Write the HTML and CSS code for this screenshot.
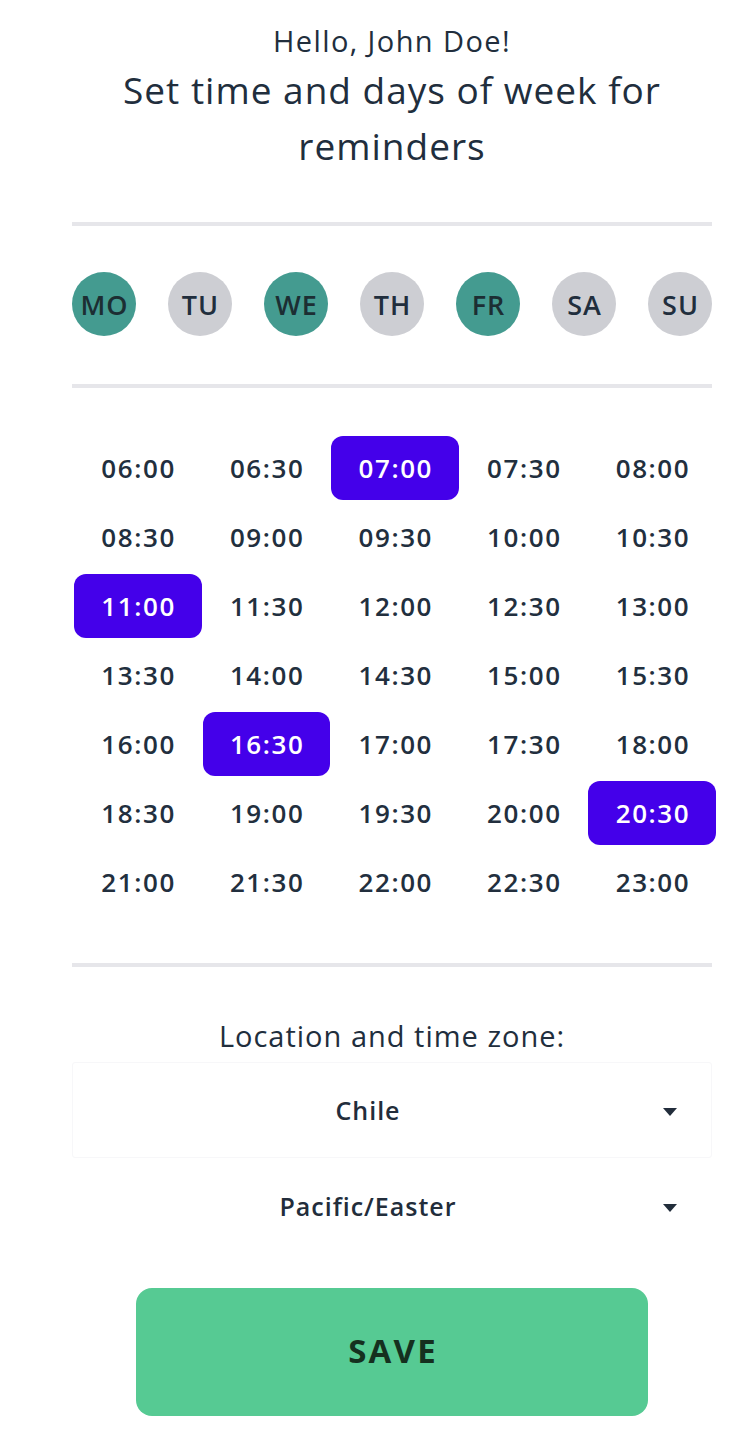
FILE: index.html
```html
<!DOCTYPE html>
<html>
<head>
<meta charset="utf-8">
<link rel="stylesheet" href="styles.css">
</head>
<body>
<main class="page">
  <header class="head">
    <p class="hello">Hello, John Doe!</p>
    <h1 class="title">Set time and days of week for reminders</h1>
  </header>
  <hr class="divider divider-top">
  <div class="days">
    <span class="day on">MO</span>
    <span class="day">TU</span>
    <span class="day on">WE</span>
    <span class="day">TH</span>
    <span class="day on">FR</span>
    <span class="day">SA</span>
    <span class="day">SU</span>
  </div>
  <hr class="divider">
  <div class="times">
    <span class="time">06:00</span><span class="time">06:30</span><span class="time sel">07:00</span><span class="time">07:30</span><span class="time">08:00</span>
    <span class="time">08:30</span><span class="time">09:00</span><span class="time">09:30</span><span class="time">10:00</span><span class="time">10:30</span>
    <span class="time sel">11:00</span><span class="time">11:30</span><span class="time">12:00</span><span class="time">12:30</span><span class="time">13:00</span>
    <span class="time">13:30</span><span class="time">14:00</span><span class="time">14:30</span><span class="time">15:00</span><span class="time">15:30</span>
    <span class="time">16:00</span><span class="time sel">16:30</span><span class="time">17:00</span><span class="time">17:30</span><span class="time">18:00</span>
    <span class="time">18:30</span><span class="time">19:00</span><span class="time">19:30</span><span class="time">20:00</span><span class="time sel">20:30</span>
    <span class="time">21:00</span><span class="time">21:30</span><span class="time">22:00</span><span class="time">22:30</span><span class="time">23:00</span>
  </div>
  <hr class="divider divider-bottom">
  <p class="loc-label">Location and time zone:</p>
  <div class="select framed">
    <span class="select-text">Chile</span>
    <span class="select-arrow"><svg width="14" height="8" viewBox="0 0 14 8"><path d="M0 0H14L7 8Z" fill="#222d3b"/></svg></span>
  </div>
  <div class="select">
    <span class="select-text">Pacific/Easter</span>
    <span class="select-arrow"><svg width="14" height="8" viewBox="0 0 14 8"><path d="M0 0H14L7 8Z" fill="#222d3b"/></svg></span>
  </div>
  <div class="actions">
    <button class="save">SAVE</button>
  </div>
</main>
</body>
</html>
```
FILE: styles.css
```css
* { box-sizing: border-box; }
html, body { margin: 0; padding: 0; background: #ffffff; }
body {
  font-family: "Open Sans", Lato, "Liberation Sans", sans-serif;
  color: #212e3d;
}
.page {
  width: 640px;
  margin-left: 72px;
  padding-top: 20px;
}
.head { text-align: center; }
.hello {
  margin: 0;
  font-size: 29px;
  line-height: 42px;
  font-weight: 400;
  letter-spacing: 1.4px;
}
.title {
  margin: 0 auto;
  font-size: 37px;
  line-height: 56px;
  font-weight: 400;
  letter-spacing: 1px;
  max-width: 600px;
}
.divider {
  border: 0;
  height: 4px;
  background: #e6e6ea;
  margin: 0;
}
.divider-top { margin-top: 48px; }
.days {
  display: flex;
  justify-content: space-between;
  margin: 46px 0 48px;
}
.day {
  width: 64px;
  height: 64px;
  border-radius: 50%;
  background: #cdced3;
  display: flex;
  align-items: center;
  justify-content: center;
  font-size: 27px;
  font-weight: 600;
  letter-spacing: 1px;
  padding-left: 1px;
  color: #212e3d;
}
.day.on { background: #449b90; color: #1c2e33; }
.times {
  display: grid;
  grid-template-columns: repeat(5, 1fr);
  column-gap: 1px;
  row-gap: 5px;
  width: 642px;
  margin: 48px 0 0 2px;
}
.time {
  height: 64px;
  display: flex;
  align-items: center;
  justify-content: center;
  font-size: 26px;
  font-weight: 600;
  letter-spacing: 1.6px;
  padding-left: 1.6px;
  color: #222f3e;
  border-radius: 12px;
}
.time.sel { background: #4400ea; color: #ffffff; font-weight: 600; }
.divider-bottom { margin-top: 49px; }
.loc-label {
  margin: 49px 0 0;
  text-align: center;
  font-size: 29px;
  line-height: 40px;
  letter-spacing: 1px;
}
.select {
  display: flex;
  align-items: center;
  height: 96px;
  border: 1px solid transparent;
  border-radius: 3px;
}
.select.framed {
  margin-top: 6px;
  border-color: #f7f7f9;
}
.select-text {
  flex: 1;
  text-align: center;
  font-size: 25px;
  font-weight: 600;
  letter-spacing: 1px;
  color: #222d3b;
}
.select-arrow {
  width: 48px;
  display: flex;
  align-items: center;
  padding-top: 4px;
}
.actions {
  display: flex;
  justify-content: center;
  margin-top: 34px;
  padding-bottom: 18px;
}
.save {
  width: 512px;
  height: 128px;
  border: 0;
  border-radius: 16px;
  background: #56ca93;
  color: #15301f;
  font-family: "Open Sans", Lato, "Liberation Sans", sans-serif;
  font-size: 33px;
  font-weight: 700;
  letter-spacing: 2.2px;
  padding: 0 0 4px 2px;
}
```
